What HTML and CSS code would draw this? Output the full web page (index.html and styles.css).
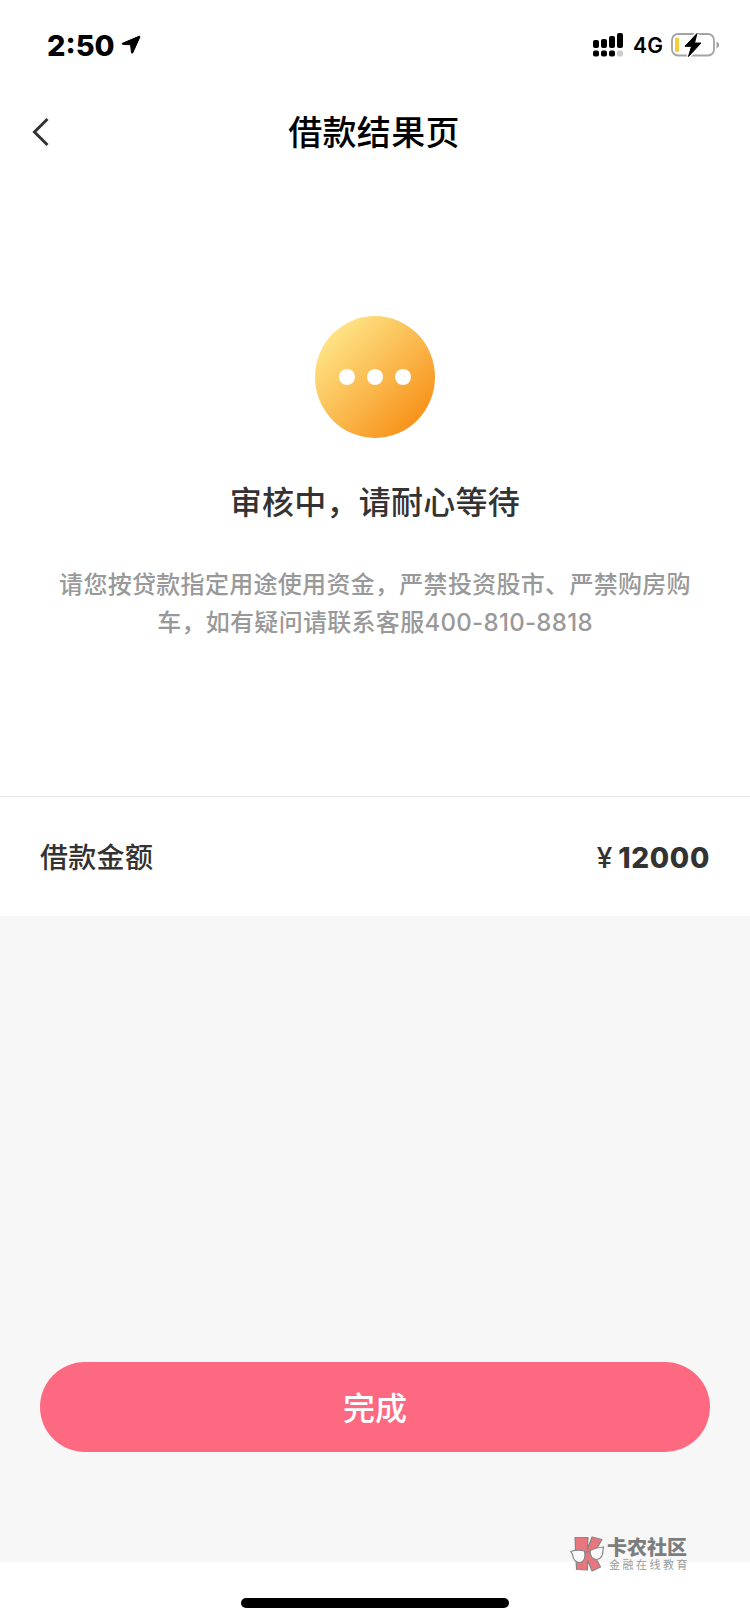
FILE: index.html
```html
<!DOCTYPE html>
<html lang="zh-CN">
    <head>
        <meta charset="utf-8" />
        <title>借款结果页</title>
        <link rel="stylesheet" href="styles.css">
    </head>

    <body>
        <div class="page">
            <div class="status-bar">
                <div class="status-left">
                    <span class="time">2:50</span>
                    <svg class="location" width="20" height="20" viewBox="0 0 20 20">
                        <path d="M18.2 1.2 1.4 8.3Q.8 8.9 1.6 9.3L9.6 9.8 10.5 17.8Q11 18.8 11.7 17.9L18.9 2Q19 1 18.2 1.2Z" stroke="#000" stroke-width="1" stroke-linejoin="round" />
                    </svg>
                </div>
                <div class="status-right">
                    <svg class="signal" width="31" height="26" viewBox="0 0 31 26">
                        <rect x="0" y="8" width="6" height="8" rx="2" />
                        <rect x="8" y="7" width="6" height="9" rx="2" />
                        <rect x="16" y="4" width="6" height="12" rx="2" />
                        <rect x="24" y="1" width="6" height="15" rx="2" />
                        <rect x="0" y="18.5" width="6" height="6" rx="2" />
                        <rect x="8" y="18.5" width="6" height="6" rx="2" />
                        <rect x="16" y="18.5" width="6" height="6" rx="2" />
                        <rect x="24" y="18.5" width="6" height="6" rx="2" fill="#ccc" />
                    </svg>
                    <span class="network">4G</span>
                    <svg class="battery" width="49" height="26" viewBox="0 0 49 26">
                        <rect x="1" y="2" width="42" height="21.5" rx="6" fill="none" stroke="#a3a3a3" stroke-width="1.8" />
                        <path d="M45.5 9.5Q48.3 10.5 48.3 13T45.5 16.5Z" fill="#a3a3a3" />
                        <rect x="4" y="5.5" width="4" height="14.5" rx="1.5" fill="#f5cd36" />
                        <path d="M26 1.5 14 14.3H20.5L17.5 24.5 30 11H23.5Z" fill="#fff" stroke="#fff" stroke-width="4" />
                        <path d="M26 1.5 14 14.3H20.5L17.5 24.5 30 11H23.5Z" fill="#000" stroke="#000" stroke-width="1" stroke-linejoin="round" />
                    </svg>
                </div>
            </div>

            <div class="nav">
                <svg class="back" width="20" height="32" viewBox="0 0 20 32">
                    <path d="M17.500 3 4.500 16 17.500 29" fill="none" stroke="#333" stroke-width="3" />
                </svg>
                <h1 class="nav-title">借款结果页</h1>
            </div>

            <div class="result">
                <div class="result-icon">
                    <i class="dot"></i>
                    <i class="dot"></i>
                    <i class="dot"></i>
                </div>
                <h2 class="result-title">审核中，请耐心等待</h2>
                <p class="result-text">请您按贷款指定用途使用资金，严禁投资股市、严禁购房购<br>车，如有疑问请联系客服400-810-8818</p>
            </div>

            <div class="amount">
                <span class="amount-label">借款金额</span>
                <span class="amount-value"><span class="yen">¥</span>12000</span>
            </div>

            <div class="content">
                <button class="submit">完成</button>
            </div>

            <div class="home">
                <div class="home-line"></div>
            </div>

            <div class="watermark">
                <svg width="35" height="36" viewBox="0 0 35 36">
                    <g fill="#e8767f" stroke="#858585" stroke-width="1.2" stroke-linejoin="round">
                        <path d="M5 1.5H18L17.5 13 22 1 32 3.5 23.5 18 30.5 31 22 35 17.5 24V34L6.500 33.5Z" />
                    </g>
                    <g fill="#fafafa" stroke="#858585" stroke-width="1.2">
                        <path d="M.8 15.5Q8 13 14.5 15 16.5 25 10 26.5 3.5 26.5 2.5 18.5Z" />
                        <path d="M20 14.5Q26 11.5 33.5 11L33 14Q33 23 26.5 23.5 20 23 20 14.5Z" />
                        <path d="M15 17Q17.5 15 20 16" fill="none" />
                    </g>
                </svg>
                <div class="watermark-text">
                    <span class="watermark-name">卡农社区</span>
                    <span class="watermark-desc">金融在线教育</span>
                </div>
            </div>
        </div>
    </body>
</html>
```

FILE: styles.css
```css
* {
    box-sizing: border-box;
}

body {
    margin: 0;
    font-family: Inter, "Noto Sans CJK SC", sans-serif;
    color: #333;
    background: #fff;
}

h1,
h2,
p {
    margin: 0;
}

svg {
    display: block;
}

.page {
    position: relative;
    display: flex;
    flex-direction: column;
    width: 750px;
    height: 1624px;
    overflow: hidden;
}

.status-bar {
    display: flex;
    justify-content: space-between;
    align-items: center;
    height: 90px;
    padding: 0 30px 0 47px;
    color: #000;
}

.status-left,
.status-right {
    display: flex;
    align-items: center;
}

.time {
    font-size: 29px;
    font-weight: 800;
}

.location {
    margin-left: 6px;
}

.network {
    width: 30px;
    margin: 1px 8px 0 9px;
    font-size: 21px;
    font-weight: 600;
    letter-spacing: 0.3px;
}

.nav {
    display: grid;
    grid-template-columns: 60px 1fr 60px;
    align-items: center;
    height: 84px;
}

.back {
    margin-left: 30px;
}

.nav-title {
    padding: 2px 2px 0 0;
    font-size: 34px;
    font-weight: 500;
    line-height: 50px;
    letter-spacing: 0.3px;
    text-align: center;
    color: #000;
}

.result {
    display: flex;
    flex-direction: column;
    align-items: center;
    height: 623px;
    padding-top: 142px;
    border-bottom: 1px solid #e5e5e5;
}

.result-icon {
    display: flex;
    justify-content: center;
    align-items: center;
    gap: 12px;
    width: 120px;
    height: 122px;
    border-radius: 50%;
    background: linear-gradient(135deg, #ffe88c 10%, #f68c12 92%);
}

.dot {
    width: 16px;
    height: 16px;
    border-radius: 50%;
    background: #fff;
}

.result-title {
    margin-top: 41px;
    font-size: 32px;
    font-weight: 500;
    line-height: 48px;
    letter-spacing: 0.25px;
}

.result-text {
    margin-top: 39px;
    font-size: 24px;
    font-weight: 500;
    line-height: 38px;
    letter-spacing: 0.3px;
    text-align: center;
    white-space: nowrap;
    color: #999;
}

.amount {
    display: flex;
    justify-content: space-between;
    align-items: center;
    height: 119px;
    padding: 0 40px;
    font-size: 28px;
    font-weight: 500;
}

.amount-label {
    padding-bottom: 2px;
    letter-spacing: 0.3px;
}

.amount-value {
    padding-top: 2px;
    font-weight: 800;
    letter-spacing: 0.7px;
}

.yen {
    margin-right: 5px;
    font-weight: 500;
}

.content {
    height: 646px;
    padding: 446px 40px 0;
    background: #f7f7f7;
}

.submit {
    display: block;
    width: 100%;
    height: 90px;
    padding: 0 0 2px;
    border: none;
    border-radius: 45px;
    background: #fd6980;
    font-family: inherit;
    font-size: 32px;
    font-weight: 500;
    color: #fff;
}

.home {
    display: flex;
    justify-content: center;
    padding-top: 36px;
}

.home-line {
    width: 268px;
    height: 10px;
    border-radius: 5px;
    background: #000;
}

/* логотип поверх страницы */
.watermark {
    position: absolute;
    left: 570px;
    top: 1536px;
    display: flex;
    gap: 2px;
}

.watermark-text {
    display: flex;
    flex-direction: column;
    padding-top: 2px;
    white-space: nowrap;
}

.watermark-name {
    font-size: 20px;
    font-weight: 900;
    line-height: 21px;
    color: #7d7d7d;
}

.watermark-desc {
    margin-left: 2px;
    font-size: 11px;
    line-height: 12px;
    letter-spacing: 2.5px;
    color: #999;
}
```
